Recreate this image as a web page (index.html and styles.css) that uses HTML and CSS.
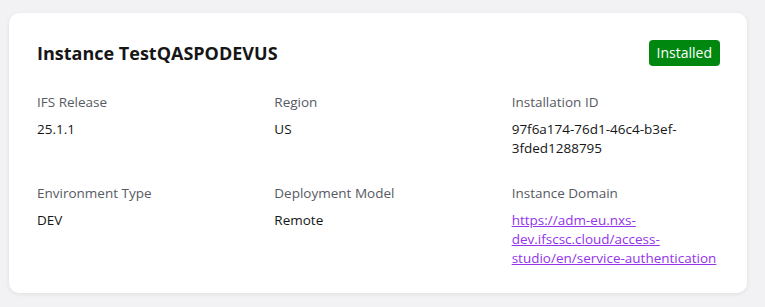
FILE: index.html
```html
<!DOCTYPE html>
<html lang="en">
<head>
    <meta charset="UTF-8">
    <title>Instance TestQASPODEVUS</title>
    <link rel="stylesheet" href="styles.css">
</head>
<body>
    <div class="card">
        <!-- Header -->
        <div class="card-header">
            <h2>Instance TestQASPODEVUS</h2>
            <span class="badge">Installed</span>
        </div>

        <!-- Details -->
        <div class="details">
            <div class="field">
                <div class="label">IFS Release</div>
                <div class="value">25.1.1</div>
            </div>
            <div class="field">
                <div class="label">Region</div>
                <div class="value">US</div>
            </div>
            <div class="field">
                <div class="label">Installation ID</div>
                <div class="value">97f6a174-76d1-46c4-b3ef-3fded1288795</div>
            </div>
            <div class="field">
                <div class="label">Environment Type</div>
                <div class="value">DEV</div>
            </div>
            <div class="field">
                <div class="label">Deployment Model</div>
                <div class="value">Remote</div>
            </div>
            <div class="field">
                <div class="label">Instance Domain</div>
                <div class="value"><a href="#">https://adm-eu.nxs-dev.ifscsc.cloud/access-studio/en/service-authentication</a></div>
            </div>
        </div>
    </div>
</body>
</html>
```

FILE: styles.css
```css
body {
    font-family: 'Open Sans', sans-serif;
    margin: 0;
    padding: 13px 18px 15px 9px;
    background-color: #f2f1f4;
}

.card {
    background: #fff;
    border-radius: 10px;
    box-shadow: 0 1px 4px rgba(0, 0, 0, 0.08);
    padding: 27px 27px 25px 28px;
}

.card-header {
    display: flex;
    justify-content: space-between;
    align-items: center;
    height: 26px;
    margin-bottom: 27px;
}

.card-header h2 {
    margin: 0;
    font-size: 18px;
    font-weight: 700;
    color: #161616;
}

.badge {
    background-color: #00870f;
    color: #fff;
    font-size: 14px;
    line-height: 26px;
    padding: 0 8px;
    border-radius: 4px;
}

.details {
    display: grid;
    grid-template-columns: repeat(3, 1fr);
    column-gap: 29px;
    row-gap: 26px;
    font-size: 13.5px;
    line-height: 19px;
}

.label {
    color: #565a63;
    margin-bottom: 8px;
}

.value {
    color: #161616;
    overflow-wrap: break-word;
}

.value a {
    color: #9333ea;
}
```
